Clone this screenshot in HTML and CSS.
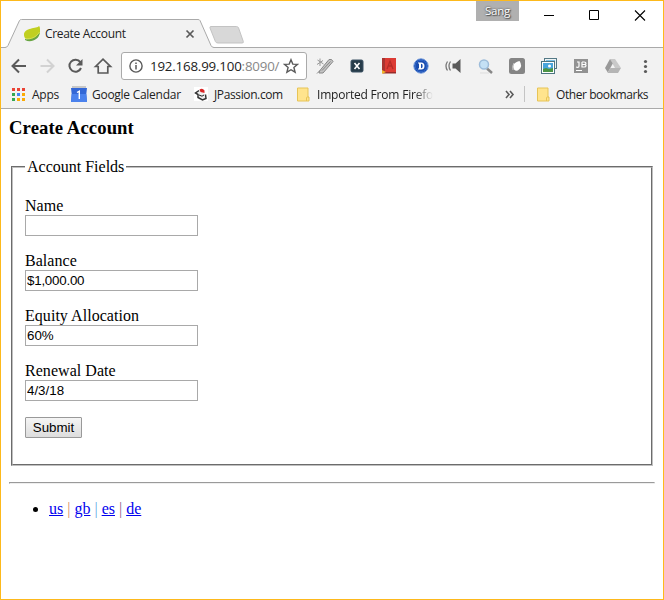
FILE: index.html
```html
<!DOCTYPE html>
<html lang="en">
<head>
<meta charset="utf-8">
<title>Create Account</title>
<link rel="stylesheet" href="styles.css">
</head>
<body>
<div class="window">
  <header class="titlebar">
    <div class="tab">
      <svg class="tab-shape" width="240" height="30" viewBox="0 0 240 30">
        <path d="M0 29.5V28.5H4Q6 28.5 7 26.5L18.5 1.5Q19 .5 20.500 .5H197Q198.500 .5 199 1.500L210 26.500Q211 28.500 213 28.500H240V30H0Z" fill="#f2f2f2"/>
        <path d="M0 28.500H4Q6 28.500 7 26.500L18.500 1.500Q19 .5 20.500 .5H197Q198.500 .5 199 1.500L210 26.500Q211 28.500 213 28.500H240" fill="none" stroke="#aaa"/>
      </svg>
      <svg class="leaf" width="18" height="18" viewBox="0 0 18 18">
        <path d="M16 1C14 4 1 2 1 10c0 2 1 3 2 4 7 3 15-2 14-9 0-2 0-3-1-4Z" fill="#c0cf20"/>
        <path d="M2 14c6 1 11-1 14.500-6.500C17 14 8 18.500 2 15Z" fill="#68a542"/>
        <path d="M2 13.500c6 1 11-1 14.500-6.500" fill="none" stroke="#dce66a" stroke-width=".7"/>
      </svg>
      <span class="tab-title">Create Account</span>
      <svg class="tab-close" width="10" height="10" viewBox="0 0 10 10"><path d="M1.500 1.500l7 7m0-7l-7 7" stroke="#5a5a5a" stroke-width="1.700"/></svg>
    </div>
    <svg class="newtab" width="36" height="18" viewBox="0 0 36 18"><path d="M2 .5H27.500Q29 .5 29.600 2L34.300 15.500Q34.800 17 33 17H9Q7 17 6.400 15.500L1 2Q.5 .5 2 .5Z" fill="#d8d8d8" stroke="#c3c3c3"/></svg>
    <div class="user">Sang</div>
    <div class="controls">
      <svg width="45" height="28" viewBox="0 0 45 28"><path d="M17 14.500h10" stroke="#000"/></svg>
      <svg width="45" height="28" viewBox="0 0 45 28"><path d="M17.500 9.500h9v9h-9z" fill="none" stroke="#000"/></svg>
      <svg width="45" height="28" viewBox="0 0 45 28"><path d="M18 9.500l10 10m0-10l-10 10" stroke="#000" stroke-width="1.100"/></svg>
    </div>
  </header>
  <section class="chrome">
    <div class="toolbar">
      <svg class="nav" width="112" height="28" viewBox="0 0 112 28">
        <g fill="none" stroke="#5a5a5a" stroke-width="2">
          <path d="M18 7.500L11.500 14l6.500 6.500M12 14h13"/>
          <path d="M46 7.500l6.500 6.500-6.500 6.500M52 14H39.500" stroke="#d2d2d2"/>
          <path d="M79.300 10.200A6 6 0 1 0 80 16"/>
          <path d="M94.500 14.500L102 7.200l7.500 7.300h-2.700v6.500h-9.600v-6.500Z" stroke-width="1.700"/>
        </g>
        <path d="M81.500 7v6.500H75Z" fill="#5a5a5a"/>
      </svg>
      <div class="omnibox">
        <svg class="info" width="14" height="14" viewBox="0 0 14 14"><circle cx="7" cy="7" r="6.100" fill="none" stroke="#5a5a5a" stroke-width="1.400"/><path d="M7 6v4.500M7 3.500v1.500" stroke="#5a5a5a" stroke-width="1.500"/></svg>
        <span class="url">192.168.99.100<span class="port">:8090/</span></span>
        <svg class="star" width="16" height="16" viewBox="0 0 16 16"><path d="M8 1.700l1.800 4.400 4.700.3-3.600 3.100 1.200 4.700L8 11.700l-4.100 2.500 1.200-4.700L1.500 6.400l4.700-.3Z" fill="none" stroke="#5a5a5a" stroke-width="1.400"/></svg>
      </div>
      <svg class="extensions" width="355" height="28" viewBox="308 52 355 28">
        <g stroke="#999" fill="none"><path d="M317.500 60l6 4m-6.500.500l6-4m-3-2v7.500"/><path d="M319.500 71l9.500-11.500q3-1 4 2L323 73h-4z" fill="#c4c4c4" stroke="#888"/><path d="M322 70.500l8.500-9M317 73.500l3-3" stroke="#888"/></g>
        <rect x="351" y="60" width="12" height="12" rx="1.500" fill="#273c4a" stroke="#3c5364"/>
        <path d="M354.500 63l5 6m0-6l-5 6" stroke="#fff" stroke-width="1.600"/>
        <path d="M382 58h14v15h-14z" fill="#dc3b34"/><path d="M382 58h3v15h-3z" fill="#a93431"/><path d="M383 72h13v1.500h-13z" fill="#982d2b"/><path d="M387 69l3-8 3 8m-5-3h4" fill="none" stroke="#b52c28" stroke-width="1.300"/><path d="M382 70l4 2-4 2z" fill="#efb52a"/>
        <circle cx="421" cy="66" r="7.200" fill="#194cae" stroke="#739bdd"/><circle cx="421" cy="66" r="5.700" fill="none" stroke="#2f65c8"/>
        <path d="M418 62.500h3.200q3.300 0 3.300 3.500t-3.300 3.500H418v-1h1v-5h-1zm3 1.200v4.600q1.700 0 1.700-2.300t-1.700-2.300" fill="#fff"/>
        <path d="M452.500 63.500h3l5-4.500v14l-5-4.500h-3z" fill="#5b5b5b"/><path d="M450.500 61.500q-3 4.500 0 9m-3-9q-3 4.500 0 9" fill="none" stroke="#777" stroke-width="1.300"/>
        <path d="M487 68.500l5 4.500" stroke="#888" stroke-width="2.500"/><circle cx="484" cy="64.500" r="4.500" fill="#c4e0f5" stroke="#9dbcda" stroke-width="1.500"/><path d="M480 73h9" stroke="#ddd"/>
        <rect x="509" y="58" width="16" height="16" rx="2.500" fill="#858585"/><path d="M519.500 61q3.500 5-.5 8.500-2.500 2.500-5 0-2-4 1-6.500 2-1.500 4.500-2Z" fill="#fff"/><path d="M513 70q-1-4 1-7" fill="none" stroke="#ccc"/>
        <rect x="544.500" y="58.500" width="12" height="10" fill="#eef4f5" stroke="#547986"/><path d="M546 60h9v7h-9z" fill="#7bc1e6"/><rect x="541.500" y="61.500" width="13" height="12" fill="#fff" stroke="#4d7581"/><path d="M543 63h10v6h-10z" fill="#48a5dc"/><path d="M543 69l3-1 3 1 4-1v4h-10z" fill="#4c9445"/><circle cx="549.500" cy="66" r="1.500" fill="#fff"/>
        <path d="M574 59h14v14h-14z" fill="#929292"/><path d="M576 67q3 1 3-1v-4h-2m5 0v5h2q2 0 2-1.300t-2-1.200h-2m0-2.500h2q2 0 2 1.200t-2 1.300M576 70.500h6" fill="none" stroke="#fff" stroke-width="1.200"/>
        <path d="M610 59h5l6 9h-6Z" fill="#c9c9c9"/><path d="M610 59l2.800 4.500-5 9L605 68Z" fill="#999"/><path d="M610.300 68H621l-3 5h-10.500Z" fill="#b5b5b5"/>
        <g fill="#5a5a5a"><circle cx="645.500" cy="61.500" r="1.600"/><circle cx="645.500" cy="66.500" r="1.600"/><circle cx="645.500" cy="71.500" r="1.600"/></g>
      </svg>
    </div>
    <nav class="bookmarks">
      <svg class="apps-icon" width="13" height="13" viewBox="0 0 13 13"><path d="M0 0h3v3H0zM5 0h3v3H5zM10 0h3v3h-3z" fill="#ea4335"/><path d="M0 5h3v3H0zM0 10h3v3H0z" fill="#34a853"/><path d="M5 5h3v3H5z" fill="#4285f4"/><path d="M10 5h3v3h-3zM5 10h3v3H5zM10 10h3v3h-3z" fill="#fbab05"/></svg>
      <span class="apps">Apps</span>
      <svg class="calendar-icon" width="16" height="16" viewBox="0 0 16 16"><path d="M1 0h14v4H1z" fill="#c7c7c7"/><path d="M0 2h16l-.7 6 .7 8H0l.7-8z" fill="#3367d6"/><path d="M.7 8h14.600L16 16H0z" fill="#4b82ed"/><path d="M6 6.500l2.300-1.300V13" fill="none" stroke="#fff" stroke-width="1.400"/></svg>
      <span class="calendar">Google Calendar</span>
      <svg class="java-icon" width="15" height="16" viewBox="0 0 15 16"><path d="M0 1h14v14H0z" fill="#fff"/><path d="M5 4.500L1.500 7l2.500 1.500v3l4.500 2.500 3.500-1.500-.5-4" fill="#eee" stroke="#333" stroke-width="1.500"/><path d="M5.500 3.500q3-2 5 1v2.500l-4-1z" fill="#d82525"/><path d="M5 9l3 1.200 2-1.200" fill="none" stroke="#222"/></svg>
      <span class="jpassion">JPassion.com</span>
      <svg class="folder-icon" width="13" height="15" viewBox="0 0 13 15"><path d="M.5 1h10.500v9h1v4H.5z" fill="#ffe48d" stroke="#e7c456"/><path d="M9.500 14V11q0-1 1-1h1" fill="none" stroke="#e7c456"/></svg>
      <span class="imported">Imported From Firefox</span>
      <svg class="more" width="10" height="9" viewBox="0 0 10 9"><path d="M1 1l3 3.500L1 8m4-7l3 3.500L5 8" fill="none" stroke="#5a5a5a" stroke-width="1.600"/></svg>
      <span class="divider"></span>
      <svg class="folder-icon" width="13" height="15" viewBox="0 0 13 15"><path d="M.5 1h10.500v9h1v4H.5z" fill="#ffe48d" stroke="#e7c456"/><path d="M9.500 14V11q0-1 1-1h1" fill="none" stroke="#e7c456"/></svg>
      <span class="other">Other bookmarks</span>
    </nav>
  </section>
  <main class="page">
    <h3>Create Account</h3>
    <form>
      <fieldset>
        <legend>Account Fields</legend>
        <p><label for="name">Name</label><input id="name" type="text"></p>
        <p><label for="balance">Balance</label><input id="balance" type="text" value="$1,000.00"></p>
        <p><label for="equity">Equity Allocation</label><input id="equity" type="text" value="60%"></p>
        <p><label for="renewal">Renewal Date</label><input id="renewal" type="text" value="4/3/18"></p>
        <button type="button">Submit</button>
      </fieldset>
    </form>
    <hr>
    <ul><li><a href="#">us</a> <span class="bar-orange">|</span> <a href="#">gb</a> <span class="bar-blue">|</span> <a href="#">es</a> <span class="bar-purple">|</span> <a href="#">de</a></li></ul>
  </main>
</div>
</body>
</html>
```
FILE: styles.css
```css
* { box-sizing: border-box; }
body { margin: 0; background: #fff; }
svg { display: block; flex: none; }

.window {
  width: 664px;
  height: 600px;
  border: 1px solid #fdb91b;
  overflow: hidden;
  font-family: "Open Sans", "Noto Sans", sans-serif;
}

.titlebar {
  display: flex;
  height: 47px;
  background: linear-gradient(#aaa, #aaa) 0 100% / 100% 1px no-repeat, #fff;
}
.tab {
  display: flex;
  align-items: center;
  position: relative;
  width: 208px;
  height: 29px;
  margin-top: 18px;
  padding-left: 22px;
  color: #222;
  font-size: 12px;
}
.tab-shape { position: absolute; left: 0; top: 0; }
.leaf, .tab-title, .tab-close { position: relative; }
.leaf { margin-right: 4px; }
.tab-title { width: 140px; white-space: nowrap; letter-spacing: -.33px; }
.newtab { position: relative; margin-top: 25px; }
.user {
  width: 43px;
  height: 20px;
  margin-left: auto;
  background: #b0b0b0;
  color: #fff;
  font-size: 11.5px;
  line-height: 20px;
  letter-spacing: -.2px;
  text-align: center;
  text-shadow: 0 0 2px #333, 1px 1px 1px #555;
}
.controls { display: flex; margin-left: 8px; margin-right: 1px; }

.chrome { height: 61px; background: #f2f2f2; border-bottom: 1px solid #aaa; }
.toolbar { display: flex; height: 32px; padding-top: 4px; }
.nav { margin-right: 8px; }
.omnibox {
  display: flex;
  flex: none;
  align-items: center;
  width: 186px;
  height: 28px;
  padding: 0 7px;
  background: #fff;
  border: 1px solid #aaa;
  border-radius: 3px;
}
.extensions { margin-left: 1px; }
.info { flex: none; margin-right: 7px; }
.url {
  flex: none;
  width: 129px;
  white-space: nowrap;
  color: #222;
  font-size: 13.3px;
  letter-spacing: -.18px;
}
.port { color: #888; }
.star { margin-left: 4px; }

.bookmarks {
  display: flex;
  align-items: center;
  height: 28px;
  padding-left: 11px;
  color: #222;
  font-size: 12px;
  white-space: nowrap;
}
.bookmarks span { flex: none; }
.apps { width: 39px; margin-left: 7px; letter-spacing: -.25px; }
.calendar { width: 102px; margin-left: 5px; letter-spacing: -.27px; }
.jpassion { width: 83px; margin-left: 5px; letter-spacing: -.38px; }
.imported {
  width: 122px;
  margin-left: 7px;
  letter-spacing: -.2px;
  mask-image: linear-gradient(90deg, #000 80%, transparent 95%);
}
.more { margin-left: 66px; }
.bookmarks .divider { width: 1px; height: 16px; margin: 0 12px 0 9px; background: #c4c4c4; }
.other { margin-left: 6px; letter-spacing: -.43px; }

.page {
  padding: 8px 8px 0;
  color: #000;
  font: 16px/18px "Liberation Serif", serif;
}
h3 { margin: 0 0 19px; font-size: 18.72px; line-height: 22px; letter-spacing: .08px; }
fieldset {
  height: 308px;
  margin: 0 2px;
  padding: 21px 12px 0;
  border: 2px groove #c0c0c0;
}
legend { height: 18px; padding: 0 2px; }
p { margin: 0 0 16px; }
label { display: block; height: 18px; letter-spacing: .04px; }
input, button {
  display: block;
  height: 21px;
  font: 13.333px "Liberation Sans", sans-serif;
}
input { width: 173px; padding: 1px; border: 1px solid #a9a9a9; background: #fff; color: #000; }
#balance { letter-spacing: -.22px; }
button {
  width: 57px;
  padding: 0;
  border: 1px solid #999;
  border-radius: 1px;
  background: linear-gradient(#f5f5f5, #ddd);
  color: #000;
}
hr { height: 2px; margin: 16px 0; border: 1px solid; border-color: #9a9a9a #eee #eee #9a9a9a; }
ul { margin: 0; padding-left: 40px; }
a { color: #00e; }
.bar-orange { color: #d98c60; }
.bar-blue { color: #62a9e4; }
.bar-purple { color: #8c5f8a; }
```
